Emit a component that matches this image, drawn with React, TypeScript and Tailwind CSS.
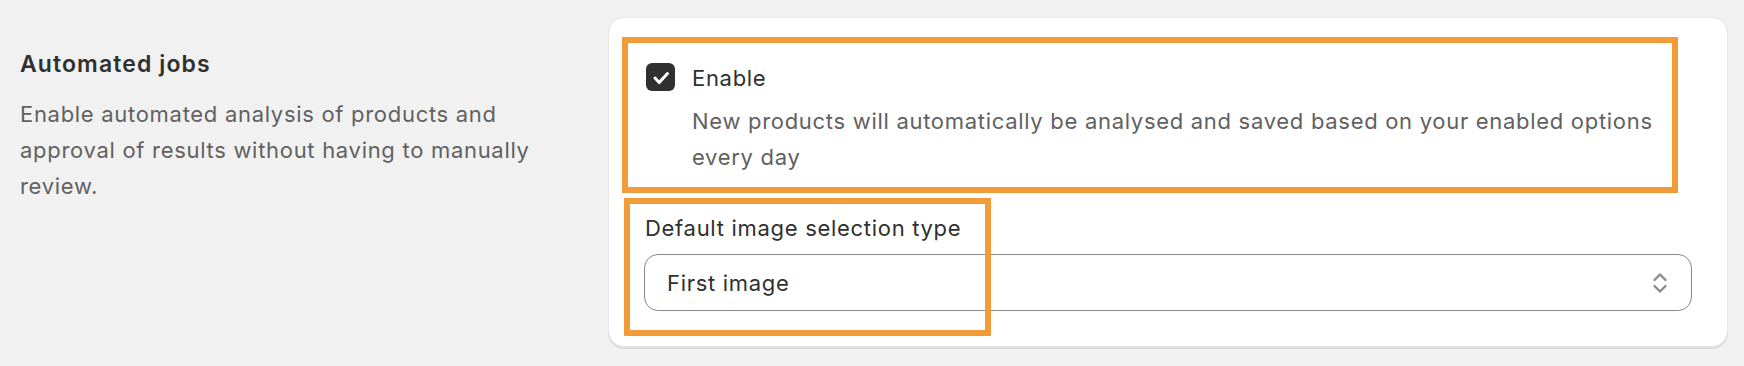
import React from "react";

function CheckIcon() {
  return (
    <svg width="28" height="28" viewBox="0 0 28 28" fill="none">
      <path
        d="M8 15l4.2 4.6L20.5 10.5"
        stroke="white"
        strokeWidth="3"
        strokeLinecap="round"
        strokeLinejoin="round"
      />
    </svg>
  );
}

function SelectIcon() {
  return (
    <svg width="14" height="20" viewBox="0 0 14 20" fill="none">
      <path
        d="M1.5 7l5.5-5.5L12.5 7"
        stroke="#8a8a8a"
        strokeWidth="2.4"
        strokeLinecap="round"
        strokeLinejoin="round"
      />
      <path
        d="M1.5 13l5.5 5.5 5.5-5.5"
        stroke="#8a8a8a"
        strokeWidth="2.4"
        strokeLinecap="round"
        strokeLinejoin="round"
      />
    </svg>
  );
}

export default function App() {
  return (
    <div
      className="flex h-[366px] w-[1744px] bg-[#f1f1f1] pt-[17px] pl-[20px] pr-[16px] text-[22px] leading-[36px] tracking-[0.7px] text-[#303030]"
      style={{ fontFamily: "Inter, 'Noto Sans', sans-serif" }}
    >
      <div className="w-[588px] shrink-0 pt-[29px]">
        <h2 className="font-semibold text-[23px] leading-[36px] tracking-[1.1px] text-[#303030]">
          Automated jobs
        </h2>
        <p className="mt-[14px] max-w-[545px] text-[#616161]">
          Enable automated analysis of products and approval of results without
          having to manually review.
        </p>
      </div>

      <div className="relative h-[330px] flex-1 rounded-[16px] border border-[#e6e6e6] bg-white px-[35px] pt-[42px] pb-[34px] shadow-[0_2px_0_0_rgba(0,0,0,0.09)]">
        <div className="flex gap-[17px] pl-[2px]">
          <div className="mt-[3px] flex h-[28px] w-[29px] shrink-0 items-center justify-center rounded-[6px] bg-[#303030]">
            <CheckIcon />
          </div>
          <div>
            <div className="text-[#303030]">Enable</div>
            <div className="mt-[7px] text-[#616161]">
              New products will automatically be analysed and saved based on
              your enabled options every day
            </div>
          </div>
        </div>

        <div className="mt-[35px]">
          <div className="pl-[1px] text-[#303030]">Default image selection type</div>
          <div className="mt-[8px] flex h-[57px] items-center justify-between rounded-[14px] border border-[#8a8a8a] pl-[22px] pr-[24px]">
            <span className="text-[#303030]">First image</span>
            <SelectIcon />
          </div>
        </div>

        <div className="pointer-events-none absolute left-[13px] top-[19px] h-[156px] w-[1056px] border-[6px] border-[#f19b39]" />
        <div className="pointer-events-none absolute left-[15px] top-[180px] h-[138px] w-[367px] border-[6px] border-[#f19b39]" />
      </div>
    </div>
  );
}
